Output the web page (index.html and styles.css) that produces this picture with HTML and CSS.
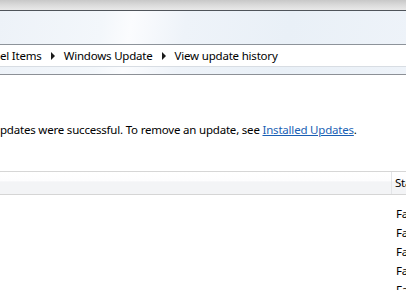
FILE: index.html
```html
<!DOCTYPE html>
<html>
<head>
<meta charset="utf-8">
<link rel="stylesheet" href="styles.css">
</head>
<body>
<div class="window">
  <div class="frame"></div>
  <div class="chrome">
    <div class="spacer"></div>
    <div class="address">
      <span class="crumb">el Items</span>
      <span class="arrow"></span>
      <span class="crumb">Windows Update</span>
      <span class="arrow"></span>
      <span class="crumb">View update history</span>
    </div>
    <div class="chrome-bottom"></div>
  </div>
  <div class="content">
    <p class="intro">pdates were successful. To remove an update, see <a href="#" class="link">Installed Updates</a>.</p>
    <div class="table">
      <div class="thead">
        <div class="th name"></div>
        <div class="th status">Status</div>
      </div>
      <div class="rows">
        <div class="row"><div class="cell name"></div><div class="cell status">Failed</div></div>
        <div class="row"><div class="cell name"></div><div class="cell status">Failed</div></div>
        <div class="row"><div class="cell name"></div><div class="cell status">Failed</div></div>
        <div class="row"><div class="cell name"></div><div class="cell status">Failed</div></div>
        <div class="row"><div class="cell name"></div><div class="cell status">Failed</div></div>
      </div>
    </div>
  </div>
</div>
</body>
</html>
```
FILE: styles.css
```css
html, body {
  margin: 0;
  padding: 0;
  background: #ffffff;
}
body {
  width: 406px;
  height: 290px;
  overflow: hidden;
  font-family: "Noto Sans", "Open Sans", sans-serif;
  font-size: 11.5px;
  letter-spacing: -0.2px;
  color: #000;
}
.window {
  display: flex;
  flex-direction: column;
  width: 406px;
  height: 290px;
  overflow: hidden;
}
.window > * {
  flex: none;
}
.frame {
  height: 10px;
  background: linear-gradient(to bottom, #c8c8c8, #dadada 50%, #e9e9e9);
  border-bottom: 1px solid #4f545a;
}
.chrome {
  display: flex;
  flex-direction: column;
  background: linear-gradient(100deg, #edf2f8 0%, #f3f7fb 25%, #fbfcfe 32%, #eef3f9 45%, #e9f0f7 70%, #eef3f9 100%);
  border-bottom: 1px solid #8c9096;
}
.chrome > * {
  flex: none;
}
.spacer {
  height: 33px;
}
.address {
  display: flex;
  align-items: center;
  height: 21px;
  background: #fff;
  border-top: 1px solid #8d939a;
  border-bottom: 1px solid #d8dde3;
  white-space: nowrap;
}
.crumb {
  line-height: 21px;
}
.arrow {
  flex: none;
  width: 0;
  height: 0;
  border-top: 4px solid transparent;
  border-bottom: 4px solid transparent;
  border-left: 4px solid #1a1a1a;
  margin: 0 9px 0 9px;
}
.chrome-bottom {
  height: 7px;
}
.content {
  display: flex;
  flex-direction: column;
  background: #fff;
}
.intro {
  margin: 47px 0 0 0;
  line-height: 16px;
  white-space: nowrap;
}
.link {
  color: #1a5fb4;
  text-decoration: underline;
}
.table {
  margin-top: 33px;
  display: flex;
  flex-direction: column;
}
.thead {
  display: flex;
  height: 22px;
  border-top: 1px solid #d6d6d6;
  border-bottom: 1px solid #d5d5d5;
  background: linear-gradient(to bottom, #ffffff 0%, #fdfdfe 40%, #f3f4f6 45%, #f3f4f6 100%);
}
.th {
  line-height: 22px;
}
.th.name, .cell.name {
  width: 391px;
  flex: none;
}
.th.status {
  border-left: 1px solid #e3e5e8;
  padding-left: 3px;
  white-space: nowrap;
}
.rows {
  display: flex;
  flex-direction: column;
  padding-top: 9px;
}
.row {
  display: flex;
  height: 19px;
}
.cell {
  line-height: 19px;
}
.cell.status {
  padding-left: 5px;
  white-space: nowrap;
}
```
